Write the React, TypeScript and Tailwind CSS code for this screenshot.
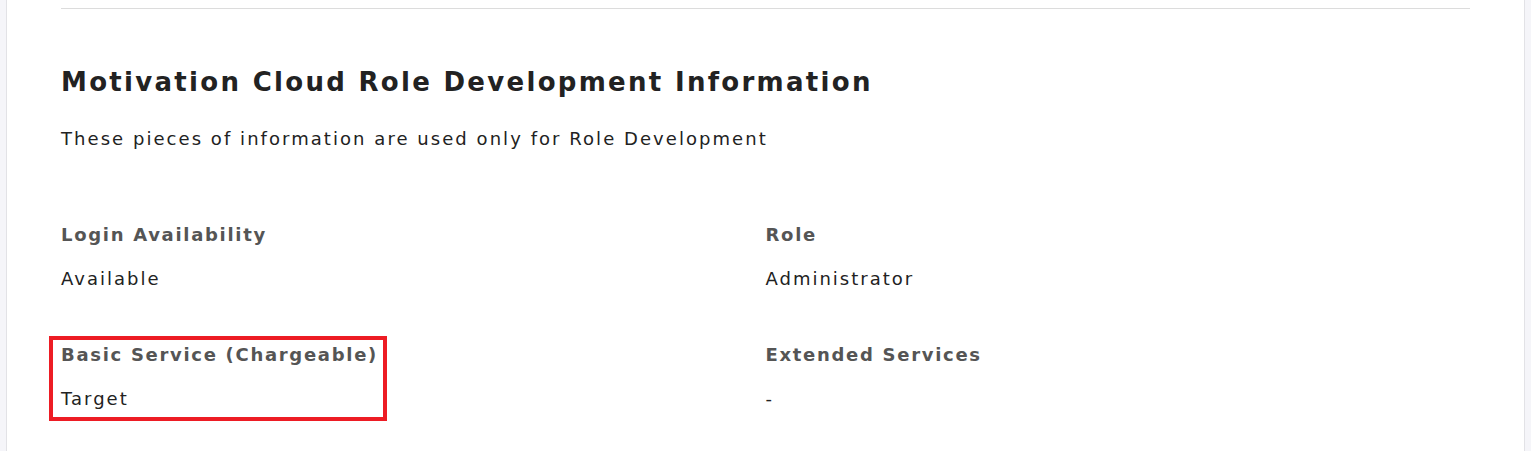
const FIELDS = [
  { label: 'Login Availability', value: 'Available' },
  { label: 'Role', value: 'Administrator' },
  { label: 'Basic Service (Chargeable)', value: 'Target', marked: true },
  { label: 'Extended Services', value: '-' },
];

export default function App() {
  return (
    <div className="min-h-[451px] bg-[#f5f5f9] px-[6px] font-['DejaVu_Sans',Verdana,sans-serif]">
      <div className="min-h-[451px] bg-white border-x border-[#e2e2e6] px-[54px] pt-[8px]">
        <div className="border-t border-[#dcdcdc]" />

        <h2 className="mt-[56px] text-[26px] font-bold leading-[34px] tracking-[2.3px] text-[#222]">
          Motivation Cloud Role Development Information
        </h2>
        <p className="mt-[28px] text-[18px] leading-[24px] tracking-[2.05px] text-[#222]">
          These pieces of information are used only for Role Development
        </p>

        <div className="mt-[72px] grid grid-cols-2 gap-y-[52px]">
          {FIELDS.map((f) => (
            <div key={f.label} className="relative">
              <div className="text-[18px] font-bold leading-[24px] tracking-[1.7px] text-[#555]">{f.label}</div>
              <div className="mt-[20px] text-[18px] leading-[24px] tracking-[2px] text-[#222]">{f.value}</div>
              {f.marked && (
                <span className="pointer-events-none absolute -left-[12px] -top-[7px] h-[85px] w-[338px] border-[4px] border-[#ed1c24]" />
              )}
            </div>
          ))}
        </div>
      </div>
    </div>
  );
}
